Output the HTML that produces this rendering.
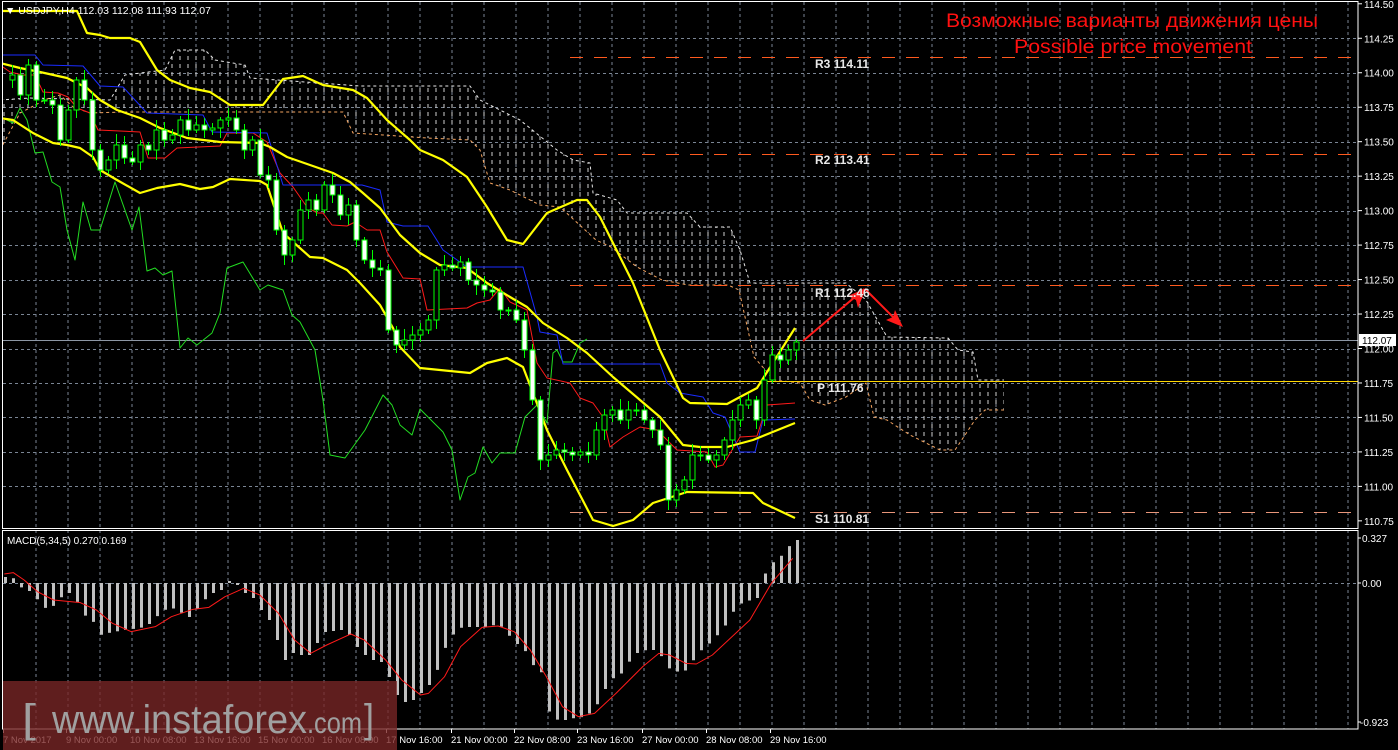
<!DOCTYPE html>
<html><head><meta charset="utf-8">
<style>
html,body{margin:0;padding:0;background:#000;}
svg{display:block;}
text{font-family:"Liberation Sans",sans-serif;}
</style></head>
<body>
<svg id="c" width="1398" height="750" viewBox="0 0 1398 750" xmlns="http://www.w3.org/2000/svg">
<defs>
<pattern id="hatch" width="8" height="8" patternUnits="userSpaceOnUse">
<line x1="4" y1="0" x2="4" y2="4" stroke="#cfcfcf" stroke-width="1"/>
</pattern>
<clipPath id="mainclip"><rect x="3" y="2" width="1355" height="526"/></clipPath>
<clipPath id="macdclip"><rect x="3" y="531" width="1355" height="198"/></clipPath>
</defs>
<rect width="1398" height="750" fill="#000"/>
<g id="grid"></g>
<g id="cloud" clip-path="url(#mainclip)"></g>
<g id="lines" clip-path="url(#mainclip)"></g>
<g id="candles" clip-path="url(#mainclip)"></g>
<g id="macd" clip-path="url(#macdclip)"></g>
<g id="top"></g>
</svg>
<script>
const NS="http://www.w3.org/2000/svg";
function el(parent,tag,attrs,txt){const e=document.createElementNS(NS,tag);for(const k in attrs)e.setAttribute(k,attrs[k]);if(txt!==undefined)e.textContent=txt;document.getElementById(parent).appendChild(e);return e;}
function pts(a){return a.map(p=>p.join(',')).join(' ');}
function pl(g,a,color,w,extra){const o={points:pts(a),fill:'none',stroke:color,'stroke-width':w,'stroke-linejoin':'round'};Object.assign(o,extra||{});return el(g,'polyline',o);}
function interp(a,x){if(x<=a[0][0])return a[0][1];for(let i=1;i<a.length;i++){if(x<=a[i][0]){const t=(x-a[i-1][0])/(a[i][0]-a[i-1][0]);return a[i-1][1]+t*(a[i][1]-a[i-1][1]);}}return a[a.length-1][1];}
const Y=p=>3.8+(114.5-p)*137.9;

// grid
for(let x=36;x<=1350;x+=32){el('grid','line',{x1:x,y1:2,x2:x,y2:729,stroke:'#7a8594','stroke-width':1,'stroke-dasharray':'3,3'});}
for(let k=1;k<15;k++){const y=Math.round(3.8+34.47*k)+0.5;el('grid','line',{x1:3,y1:y,x2:1358,y2:y,stroke:'#7a8594','stroke-width':1,'stroke-dasharray':'3,3'});}
el('grid','line',{x1:3,y1:583.5,x2:1358,y2:583.5,stroke:'#7a8594','stroke-width':1,'stroke-dasharray':'3,3'});

// cloud
const U=[[0,100],[30,98],[110,100],[125,75],[165,70],[175,50],[205,50],[215,60],[245,65],[250,78],[360,86],[470,86],[480,100],[520,120],[557,150],[573,160],[590,163],[593,193],[617,200],[627,213],[687,213],[700,227],[730,227],[740,250],[750,283],[846,283],[866,300],[887,337],[948,338],[958,350],[973,352],[978,380],[1004,380]];
const L=[[0,150],[20,113],[47,99],[60,95],[73,107],[90,113],[123,112],[250,112],[343,112],[353,133],[383,135],[427,138],[470,140],[480,150],[490,183],[510,190],[540,205],[560,207],[596,240],[611,247],[637,267],[662,280],[688,285],[728,285],[739,290],[754,357],[774,380],[800,383],[810,400],[825,405],[846,397],[866,383],[874,417],[887,420],[910,435],[940,450],[955,450],[975,420],[985,410],[1004,410]];
el('cloud','polygon',{points:pts(U.concat(L.slice().reverse())),fill:'url(#hatch)'});
pl('cloud',U,'#e8e8e8',1,{'stroke-dasharray':'3,3'});
pl('cloud',L,'#f4a460',1,{'stroke-dasharray':'3,3'});

// pivot lines
function piv(y,color,dash){el('lines','line',{x1:570,y1:y,x2:1358,y2:y,stroke:color,'stroke-width':1,'stroke-dasharray':dash});}
piv(57.5,'#ff5a1e','13,11');piv(154.5,'#ff5a1e','13,11');piv(285.5,'#ff5a1e','13,11');
piv(512.5,'#e9967a','13,11');
el('lines','line',{x1:570,y1:381.5,x2:1358,y2:381.5,stroke:'#ffd700','stroke-width':1});
el('lines','line',{x1:3,y1:340.5,x2:1358,y2:340.5,stroke:'#8c96a4','stroke-width':1});

// indicator lines
pl('lines',[[3,118],[13,123],[20,108],[27,120],[35,153],[43,152],[52,182],[60,187],[67,230],[75,260],[83,202],[91,230],[100,230],[115,182],[132,230],[139,207],[147,271],[155,268],[163,275],[172,271],[180,348],[188,338],[197,345],[212,333],[220,313],[227,268],[243,262],[260,290],[268,285],[283,290],[292,315],[300,322],[315,350],[323,400],[330,455],[345,458],[365,430],[383,395],[392,405],[400,425],[412,435],[420,409],[443,432],[452,450],[460,500],[468,477],[475,473],[483,447],[492,463],[500,453],[515,453],[525,417],[537,405],[547,423],[553,353],[557,350],[563,362],[572,362],[580,343],[587,339]],'#22dd22',1);
pl('lines',[[3,67],[10,72],[23,75],[35,75],[43,92],[58,93],[68,97],[77,108],[90,113],[98,130],[140,132],[148,158],[165,158],[177,148],[220,146],[227,133],[253,133],[267,142],[280,173],[293,187],[307,207],[317,213],[323,213],[332,225],[347,226],[355,222],[367,230],[380,230],[387,252],[403,278],[420,279],[427,310],[467,308],[477,303],[490,300],[500,288],[510,302],[527,310],[537,363],[547,378],[570,383],[580,398],[593,403],[603,417],[610,447],[623,437],[640,427],[657,430],[667,440],[677,450],[707,452],[715,467],[723,465],[732,450],[740,437],[757,436],[767,405],[795,403]],'#ff1a1a',1);
pl('lines',[[3,55],[35,55],[43,65],[83,66],[100,86],[123,87],[147,113],[203,115],[212,132],[267,133],[283,185],[362,185],[380,190],[387,222],[403,226],[428,226],[443,250],[467,267],[523,267],[537,317],[540,332],[557,335],[563,364],[660,364],[667,383],[680,393],[703,397],[713,413],[725,417],[740,452],[755,452],[763,420],[795,419]],'#1a2cff',1);
const Y1=[[0,11],[77,11],[87,33],[100,35],[110,38],[130,38],[140,42],[157,70],[170,80],[190,88],[210,92],[230,105],[263,105],[283,79],[303,76],[323,85],[353,90],[367,98],[387,120],[410,140],[420,150],[443,160],[467,177],[487,207],[507,240],[523,244],[547,213],[577,200],[587,200],[600,217],[633,283],[660,350],[683,398],[690,403],[727,404],[740,397],[757,388],[795,328]];
const Y2=[[0,63],[20,68],[40,72],[67,78],[87,88],[100,100],[117,110],[140,118],[160,128],[187,138],[220,142],[260,143],[270,147],[287,157],[310,165],[333,173],[350,182],[363,193],[380,208],[400,235],[420,253],[440,265],[467,268],[487,283],[510,297],[527,307],[543,323],[567,338],[587,353],[613,377],[640,400],[660,417],[683,445],[700,447],[727,447],[753,440],[795,423]];
const Y3=[[0,118],[13,120],[33,133],[53,143],[67,145],[80,148],[93,157],[100,170],[117,180],[140,193],[157,188],[180,184],[200,189],[213,187],[230,179],[260,181],[267,185],[283,233],[310,257],[323,258],[347,270],[360,283],[380,305],[393,328],[400,347],[420,368],[470,373],[487,363],[507,358],[523,367],[533,393],[547,430],[567,470],[593,520],[613,526],[633,520],[653,503],[687,492],[753,493],[763,503],[795,518]];
[Y1,Y2,Y3].forEach(a=>pl('lines',a,'#ffff00',2.2));

// candles
const P=[[3,80],[12,75],[20,95],[28,65],[36,100],[44,100],[52,105],[60,140],[68,110],[76,80],[84,100],[92,150],[100,170],[108,160],[116,145],[124,158],[132,162],[140,145],[148,150],[156,130],[164,140],[172,135],[180,120],[188,130],[196,125],[204,130],[212,128],[220,120],[228,118],[236,130],[244,150],[252,140],[260,175],[268,180],[276,230],[284,255],[292,240],[300,210],[308,200],[316,210],[324,185],[332,195],[340,215],[348,205],[356,240],[364,260],[372,268],[380,270],[388,330],[396,345],[404,340],[412,335],[420,330],[428,320],[436,270],[444,265],[452,268],[460,262],[468,280],[476,285],[484,290],[492,292],[500,310],[508,310],[516,320],[524,350],[532,400],[540,460],[548,455],[556,450],[564,452],[572,455],[580,452],[588,455],[596,430],[604,415],[612,410],[620,420],[628,410],[636,410],[644,420],[652,430],[660,445],[668,500],[676,490],[684,480],[692,455],[700,455],[708,460],[716,455],[724,440],[732,420],[740,405],[748,400],[756,420],[764,380],[772,355],[780,360],[788,350],[796,342]];
for(let i=1;i<P.length;i++){const x=P[i][0],o=P[i-1][1],c=P[i][1];const top=Math.min(o,c),bot=Math.max(o,c);const w1=3+((i*7)%9),w2=3+((i*5)%8);
el('candles','line',{x1:x+0.5,y1:top-w1,x2:x+0.5,y2:bot+w2,stroke:'#00ff00','stroke-width':1});
el('candles','rect',{x:x-2,y:top,width:5,height:Math.max(1,bot-top),fill:c<o?'#000':'#fff',stroke:'#00ff00','stroke-width':1});}

// arrows
el('top','polyline',{points:'803,341 862,291 858,304',fill:'none',stroke:'#ff1a1a','stroke-width':2});
el('top','polygon',{points:'866,288 848,296 856,300 858,308',fill:'#ff1a1a'});
el('top','polyline',{points:'866,290 900,324',fill:'none',stroke:'#ff1a1a','stroke-width':2});
el('top','polygon',{points:'903,327 886,320 893,317 895,310',fill:'#ff1a1a'});

// MACD
const H=[[4,577],[11,577],[19,587],[27,590],[35,598],[43,608],[51,607],[59,598],[67,592],[75,600],[83,615],[91,620],[99,635],[107,633],[123,630],[139,628],[147,625],[155,617],[163,610],[171,608],[179,612],[187,618],[195,610],[203,600],[212,593],[220,590],[228,581],[236,585],[244,593],[252,598],[260,610],[268,620],[276,640],[284,660],[292,653],[300,655],[308,655],[316,643],[324,632],[340,630],[348,635],[356,647],[364,655],[372,660],[380,662],[388,677],[396,695],[404,702],[412,700],[420,693],[428,685],[437,668],[445,645],[453,633],[461,627],[485,627],[493,625],[501,627],[509,637],[517,645],[525,652],[533,667],[541,673],[549,717],[557,720],[565,720],[573,718],[581,717],[589,713],[597,703],[605,687],[613,677],[621,673],[629,660],[637,652],[645,650],[653,650],[661,657],[669,670],[678,672],[686,670],[694,657],[702,648],[710,642],[718,633],[726,623],[734,608],[742,602],[750,600],[756,598],[763,575],[771,563],[779,557],[787,547],[795,540]];
for(let x=4;x<=796;x+=8){const y=interp(H,x);el('macd','rect',{x:x,y:Math.min(y,583),width:3,height:Math.max(1,Math.abs(y-583)),fill:'#c0c0c0'});}
const S=[[8,162],[25,158],[45,180],[70,215],[100,240],[150,248],[180,270],[210,310],[245,335],[290,320],[320,290],[360,268],[390,262],[420,230],[455,205],[485,225],[520,280],[550,360],[580,400],[610,375],[655,342],[680,360],[720,420],[750,480],[785,525],[800,520],[830,470],[860,380],[900,322],[930,318],[960,335],[990,390],[1020,470],[1050,560],[1080,590],[1110,580],[1150,520],[1200,440],[1230,400],[1250,405],[1280,430],[1300,432],[1330,405],[1400,300],[1440,190],[1480,115]].map(p=>[p[0]/1.867,p[1]/3+520]);
pl('macd',S,'#ff1a1a',1);

// frames
el('top','rect',{x:2.5,y:1.5,width:1355.5,height:527,fill:'none',stroke:'#fff','stroke-width':1});
el('top','rect',{x:2.5,y:530.5,width:1355.5,height:198.5,fill:'none',stroke:'#fff','stroke-width':1});

// price axis
const labs=['114.50','114.25','114.00','113.75','113.50','113.25','113.00','112.75','112.50','112.25','112.00','111.75','111.50','111.25','111.00','110.75'];
labs.forEach((t,k)=>{const y=3.8+34.47*k;el('top','line',{x1:1358,y1:y,x2:1362,y2:y,stroke:'#fff'});el('top','text',{x:1364,y:y+4,fill:'#fff','font-size':10},t);});
el('top','rect',{x:1359,y:334,width:37,height:12,fill:'#fff'});
el('top','text',{x:1362,y:344,fill:'#000','font-size':10},'112.07');
[[538,'0.327',1362],[583,'0.00',1362],[722,'-0.923',1360]].forEach(a=>{el('top','line',{x1:1358,y1:a[0],x2:1361,y2:a[0],stroke:'#fff'});el('top','text',{x:a[2],y:a[0]+4,fill:'#fff','font-size':10},a[1]);});

// pivot labels
[['R3  114.11',68],['R2  113.41',164],['R1  112.46',297],['P  111.76',392],['S1  110.81',523]].forEach(a=>{el('top','text',{x:a[0][0]=='P'?817:815,y:a[1],fill:'#e8e8e8','font-size':12,'font-family':'Liberation Mono, monospace','font-weight':'bold'},a[0]);});

// header texts
el('top','text',{x:5,y:14,fill:'#fff','font-size':10.5},'\u25BC USDJPY,H4  112.03 112.08 111.93 112.07');
el('top','text',{x:7,y:544,fill:'#fff','font-size':10},'MACD(5,34,5) 0.270 0.169');
el('top','text',{x:946,y:27,fill:'#ff1010','font-size':19,textLength:372,lengthAdjust:'spacingAndGlyphs'},'Возможные варианты движения цены');
el('top','text',{x:1014,y:53,fill:'#ff1010','font-size':19,textLength:238,lengthAdjust:'spacingAndGlyphs'},'Possible price movement');

// bottom axis
[['7 Nov 2017',3],['9 Nov 00:00',66],['10 Nov 08:00',130],['13 Nov 16:00',194],['15 Nov 00:00',258],['16 Nov 08:00',322],['17 Nov 16:00',386],['21 Nov 00:00',451],['22 Nov 08:00',514],['23 Nov 16:00',577],['27 Nov 00:00',642],['28 Nov 08:00',706],['29 Nov 16:00',770]].forEach(a=>{el('top','line',{x1:a[1]+0.5,y1:729,x2:a[1]+0.5,y2:733,stroke:'#fff'});el('top','text',{x:a[1],y:743,fill:'#fff','font-size':9.5},a[0]);});

// watermark
el('top','rect',{x:3,y:681,width:394,height:69,fill:'#7a2626','fill-opacity':0.78});
el('top','text',{x:22,y:732,fill:'#a0a0a0','font-size':40,textLength:14,lengthAdjust:'spacingAndGlyphs'},'[');
el('top','text',{x:52,y:733,fill:'#a0a0a0','font-size':40,textLength:255,lengthAdjust:'spacingAndGlyphs'},'www.instaforex');
el('top','text',{x:307,y:733,fill:'#a0a0a0','font-size':30,textLength:55,lengthAdjust:'spacingAndGlyphs'},'.com');
el('top','text',{x:364,y:732,fill:'#a0a0a0','font-size':40,textLength:10,lengthAdjust:'spacingAndGlyphs'},']');
</script>
</body></html>
